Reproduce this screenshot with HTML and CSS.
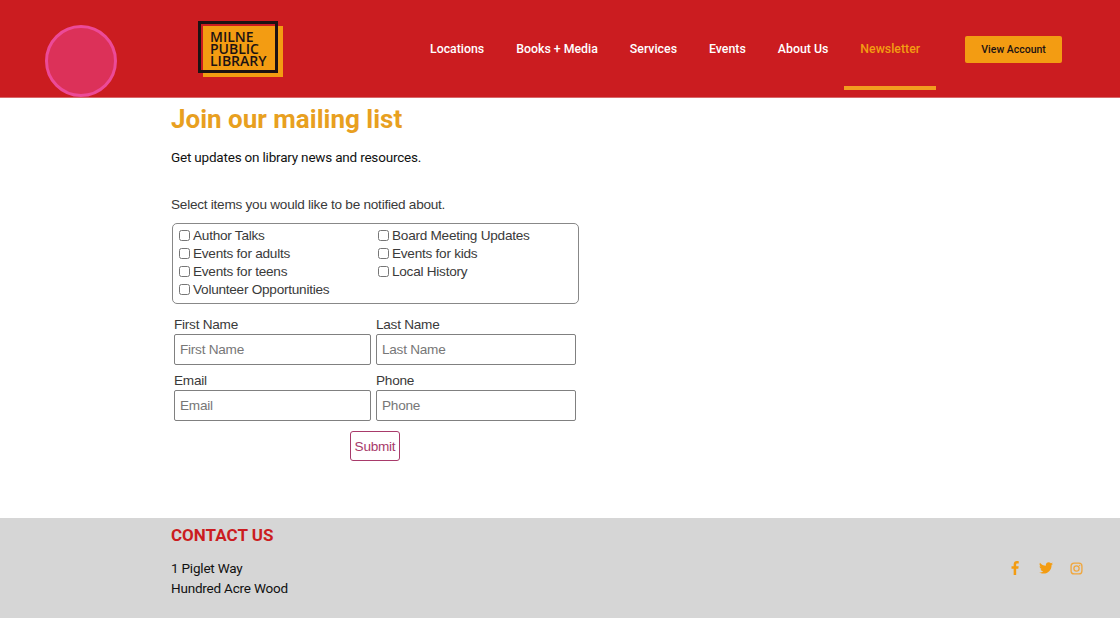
FILE: index.html
```html
<!DOCTYPE html>
<html lang="en">
<head>
    <meta charset="UTF-8">
    <title>Milne Public Library - Newsletter</title>
    <link rel="stylesheet" href="styles.css">
</head>
<body>
    <header class="site-header">
        <div class="pointer-dot"></div>
        <a class="logo" href="#">
            <span class="logo-back"></span>
            <span class="logo-frame"></span>
            <span class="logo-text"><span>MILNE</span><span>PUBLIC</span><span>LIBRARY</span></span>
        </a>
        <nav class="main-nav">
            <a href="#">Locations</a>
            <a href="#">Books + Media</a>
            <a href="#">Services</a>
            <a href="#">Events</a>
            <a href="#">About Us</a>
            <a href="#" class="active">Newsletter</a>
        </nav>
        <a class="account-btn" href="#">View Account</a>
    </header>

    <main class="content">
        <h1>Join our mailing list</h1>
        <p class="lead">Get updates on library news and resources.</p>
        <form class="signup">
            <p class="select-note">Select items you would like to be notified about.</p>
            <div class="topics">
                <label><input type="checkbox">Author Talks</label>
                <label><input type="checkbox">Board Meeting Updates</label>
                <label><input type="checkbox">Events for adults</label>
                <label><input type="checkbox">Events for kids</label>
                <label><input type="checkbox">Events for teens</label>
                <label><input type="checkbox">Local History</label>
                <label><input type="checkbox">Volunteer Opportunities</label>
            </div>
            <div class="fields">
                <label class="field">First Name<input type="text" placeholder="First Name"></label>
                <label class="field">Last Name<input type="text" placeholder="Last Name"></label>
                <label class="field">Email<input type="text" placeholder="Email"></label>
                <label class="field">Phone<input type="text" placeholder="Phone"></label>
            </div>
            <div class="submit-row"><button type="button">Submit</button></div>
        </form>
    </main>

    <footer class="site-footer">
        <div class="contact">
            <h2>CONTACT US</h2>
            <p>1 Piglet Way<br>Hundred Acre Wood</p>
        </div>
        <div class="social">
            <svg viewBox="0 0 24 24" width="14" height="14"><path fill="#f39c12" d="M14 24V13.2h3.7l.6-4.3H14V6.200c0-1.200.4-2.100 2.100-2.100h2.300V.3C18 .2 16.700 0 15.200 0 12 0 9.700 2 9.700 5.700v3.200H6v4.300h3.700V24z"/></svg>
            <svg viewBox="0 0 24 24" width="14" height="14"><path fill="#f39c12" d="M24 4.600c-.9.400-1.800.7-2.800.8 1-.6 1.800-1.600 2.200-2.700-1 .6-2 1-3.100 1.200C19.300 2.800 18 2.200 16.600 2.200c-2.700 0-4.900 2.200-4.900 4.900 0 .4 0 .8.100 1.100C7.700 8 4.100 6 1.700 3c-.4.700-.7 1.600-.7 2.500 0 1.700.9 3.200 2.200 4.100-.8 0-1.600-.2-2.200-.6v.1c0 2.400 1.700 4.400 3.900 4.800-.4.100-.8.200-1.300.2-.3 0-.6 0-.9-.1.600 2 2.400 3.400 4.600 3.400-1.700 1.300-3.800 2.100-6.100 2.100-.4 0-.8 0-1.200-.1 2.200 1.400 4.800 2.200 7.500 2.200 9.100 0 14-7.500 14-14v-.6c1-.7 1.800-1.600 2.500-2.500z"/></svg>
            <svg viewBox="0 0 24 24" width="13" height="13" fill="none" stroke="#f0a63c" stroke-width="2.400"><rect x="2" y="2" width="20" height="20" rx="5.500"/><circle cx="12" cy="12" r="4.800"/><circle cx="17.800" cy="6.200" r="1.300" fill="#f0a63c" stroke="none"/></svg>
        </div>
    </footer>
</body>
</html>
```

FILE: styles.css
```css
* { box-sizing: border-box; }
body { margin: 0; background: #fff; font-family: "Liberation Sans", Arial, sans-serif; color: #333; }
a { text-decoration: none; }

.site-header { position: relative; display: flex; align-items: flex-start; height: 98px; background: #cb1c20; border-bottom: 1px solid #d8686a; }
.pointer-dot { position: absolute; left: 45px; top: 25px; width: 72px; height: 72px; border-radius: 50%; background: #dc3159; border: 3px solid #ec4a98; }
.logo { position: relative; display: block; width: 85px; height: 56px; margin: 21px 0 0 198px; }
.logo-back { position: absolute; left: 5px; top: 5px; width: 80px; height: 51px; background: #f39c12; }
.logo-frame { position: absolute; left: 0; top: 0; width: 80px; height: 52px; border: 3px solid #1c1213; }
.logo-text { position: absolute; left: 12px; top: 10px; font-family: "Open Sans", sans-serif; font-weight: 600; font-size: 14px; color: #1c1213; white-space: nowrap; }
.logo-text span { display: block; height: 12px; line-height: 12px; }
.main-nav { display: flex; margin-left: 131px; }
.main-nav a { display: block; height: 90px; padding: 42px 16px 0; border-bottom: 4px solid transparent; font-family: Roboto, sans-serif; font-weight: 500; font-size: 12.330px; line-height: 15px; color: #fff; }
.main-nav a.active { color: #f39c12; border-bottom-color: #f39c1f; }
.account-btn { margin: 36px 0 0 29px; width: 97px; height: 27px; border-radius: 2px; background: #f39c12; font-family: Roboto, sans-serif; font-weight: 500; font-size: 10.500px; line-height: 27px; text-align: center; color: #1c1213; }

.content { height: 420px; padding-left: 171px; }
h1 { margin: 0; padding-top: 5px; font-family: Roboto, sans-serif; font-weight: 700; font-size: 26px; line-height: 32px; color: #e8a01f; }
.lead { margin: 12px 0 0; font-family: Roboto, sans-serif; font-size: 13.500px; letter-spacing: -0.200px; line-height: 20px; color: #111; }
.signup { width: 408px; font-size: 13.600px; letter-spacing: -0.250px; color: #3a3a3a; }
.select-note { margin: 28px 0 8px; line-height: 20px; }
.topics { display: grid; grid-template-columns: 199px 1fr; grid-auto-rows: 18px; height: 81px; margin-left: 1px; padding: 3px 0 0 6px; border: 1px solid #888; border-radius: 5px; line-height: 18px; }
.topics input { width: 11px; height: 11px; margin: -2px 3px 0 0; }
.topics label { display: flex; align-items: center; white-space: nowrap; }
.fields { display: grid; grid-template-columns: 197px 200px; column-gap: 5px; row-gap: 8px; margin: 13px 0 0 3px; }
.field { display: block; line-height: 16px; }
.field input { display: block; width: 100%; height: 31px; margin-top: 1px; padding: 0 5px; border: 1px solid #808080; border-radius: 2px; font: inherit; letter-spacing: inherit; color: #333; }
.field input::placeholder { color: #777; }
.submit-row { display: flex; justify-content: center; margin-top: 10px; }
.submit-row button { width: 50px; height: 30px; padding: 0; background: #fff; border: 1px solid #a83a6a; border-radius: 3px; font: inherit; letter-spacing: inherit; color: #a83a6a; }

.site-footer { display: flex; justify-content: space-between; height: 100px; padding: 0 37px 0 171px; background: #d6d6d6; }
h2 { margin: 6px 0 0; font-family: Roboto, sans-serif; font-weight: 700; font-size: 17px; line-height: 22px; color: #cb1c20; }
.contact p { margin: 12px 0 0; font-family: Roboto, sans-serif; font-size: 13.500px; letter-spacing: -0.200px; line-height: 20px; color: #111; }
.social { display: flex; gap: 17px; align-items: center; height: 14px; margin-top: 43px; }
```
